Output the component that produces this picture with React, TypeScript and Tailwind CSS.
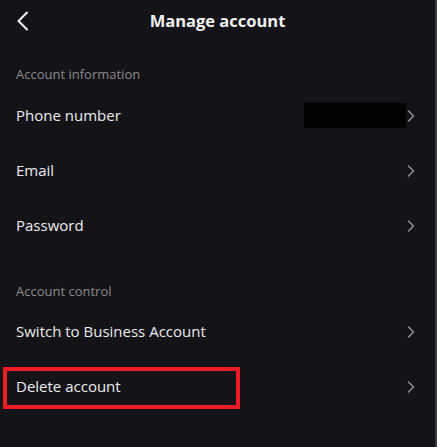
import React from "react"

function Chevron() {
  return (
    <svg width="8" height="12" viewBox="0 0 8 12" fill="none" className="shrink-0">
      <path d="M1.5 1 L6.5 6 L1.5 11" stroke="#8e8e92" strokeWidth="1.6" strokeLinecap="round" strokeLinejoin="round" />
    </svg>
  )
}

function Row({ label, children, boxed }: { label: string; children?: React.ReactNode; boxed?: boolean }) {
  return (
    <div className="relative flex h-[55px] items-center pl-4 pr-5">
      <span className="text-[15px] text-[#ececee]">{label}</span>
      <div className="flex-1" />
      {children}
      <Chevron />
      {boxed && (
        // red highlight drawn over the row
        <div className="absolute left-[3px] top-[8px] h-[42px] w-[237px] border-4 border-[#ec1c26]" />
      )}
    </div>
  )
}

function SectionLabel({ text, className }: { text: string; className: string }) {
  return (
    <div className={`px-4 text-[13px] leading-5 text-[#8b8a90] ${className}`}>{text}</div>
  )
}

export default function App() {
  return (
    <div
      className="h-[447px] w-[437px] overflow-hidden border-r-2 border-[#3a393e] bg-[#141317]"
      style={{ fontFamily: '"Open Sans", "Liberation Sans", sans-serif' }}
    >
      {/* Header */}
      <div className="relative flex h-[42px] items-center justify-center">
        <svg
          width="14"
          height="20"
          viewBox="0 0 14 20"
          fill="none"
          className="absolute left-[16px] top-[11px]"
        >
          <path d="M11 1.5 L2.5 10 L11 18.5" stroke="#f2f2f2" strokeWidth="2" strokeLinecap="round" strokeLinejoin="round" />
        </svg>
        <h1 className="text-[16.5px] font-bold text-[#f1f1f1]">Manage account</h1>
      </div>

      {/* Account information */}
      <SectionLabel text="Account information" className="h-[46px] pt-[22px]" />
      <Row label="Phone number">
        <div className="mr-px h-[25px] w-[102px] bg-black" />
      </Row>
      <Row label="Email" />
      <Row label="Password" />

      {/* Account control */}
      <SectionLabel text="Account control" className="h-[51px] pt-[28px]" />
      <Row label="Switch to Business Account" />
      <Row label="Delete account" boxed />
    </div>
  )
}
